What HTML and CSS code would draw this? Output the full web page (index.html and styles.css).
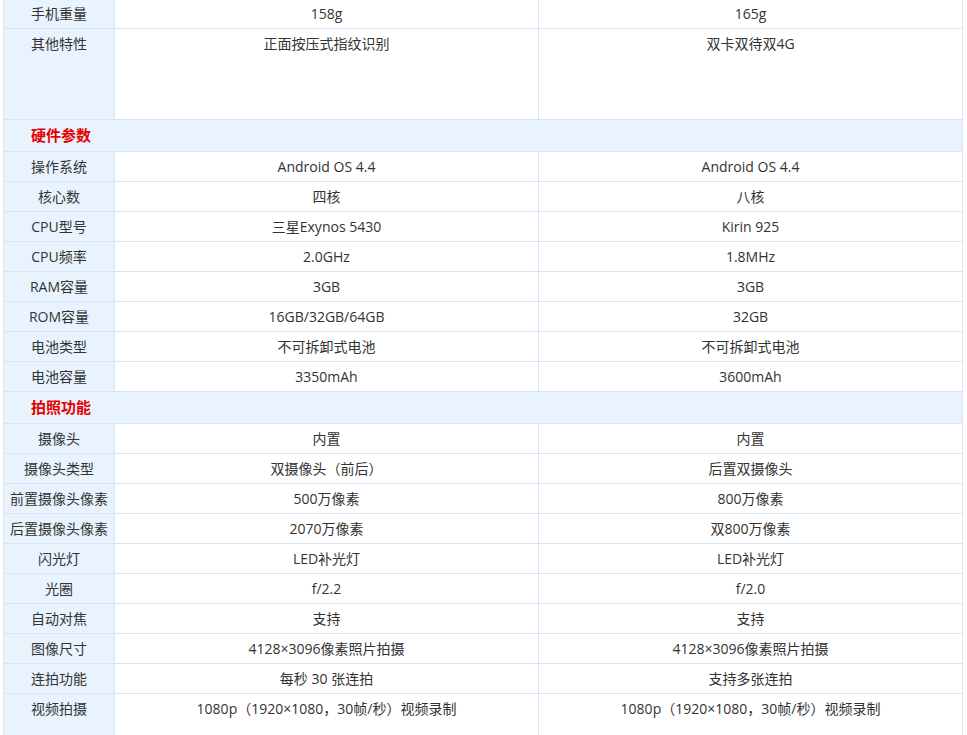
FILE: index.html
```html
<!DOCTYPE html>
<html lang="zh-CN">
<head>
<meta charset="utf-8">
<title>参数对比</title>
<link rel="stylesheet" href="styles.css">
</head>
<body>
<div class="wrap">
<table class="spec">
<colgroup><col class="c-label"><col class="c-val"><col class="c-val2"></colgroup>
<tbody>
<tr><th class="label">手机重量</th><td>158g</td><td>165g</td></tr>
<tr class="tall"><th class="label">其他特性</th><td>正面按压式指纹识别</td><td>双卡双待双4G</td></tr>
<tr class="section"><th colspan="3">硬件参数</th></tr>
<tr><th class="label">操作系统</th><td>Android OS 4.4</td><td>Android OS 4.4</td></tr>
<tr><th class="label">核心数</th><td>四核</td><td>八核</td></tr>
<tr><th class="label">CPU型号</th><td>三星Exynos 5430</td><td>Kirin 925</td></tr>
<tr><th class="label">CPU频率</th><td>2.0GHz</td><td>1.8MHz</td></tr>
<tr><th class="label">RAM容量</th><td>3GB</td><td>3GB</td></tr>
<tr><th class="label">ROM容量</th><td>16GB/32GB/64GB</td><td>32GB</td></tr>
<tr><th class="label">电池类型</th><td>不可拆卸式电池</td><td>不可拆卸式电池</td></tr>
<tr><th class="label">电池容量</th><td>3350mAh</td><td>3600mAh</td></tr>
<tr class="section"><th colspan="3">拍照功能</th></tr>
<tr><th class="label">摄像头</th><td>内置</td><td>内置</td></tr>
<tr><th class="label">摄像头类型</th><td>双摄像头（前后）</td><td>后置双摄像头</td></tr>
<tr><th class="label">前置摄像头像素</th><td>500万像素</td><td>800万像素</td></tr>
<tr><th class="label">后置摄像头像素</th><td>2070万像素</td><td>双800万像素</td></tr>
<tr><th class="label">闪光灯</th><td>LED补光灯</td><td>LED补光灯</td></tr>
<tr><th class="label">光圈</th><td>f/2.2</td><td>f/2.0</td></tr>
<tr><th class="label">自动对焦</th><td>支持</td><td>支持</td></tr>
<tr><th class="label">图像尺寸</th><td>4128×3096像素照片拍摄</td><td>4128×3096像素照片拍摄</td></tr>
<tr><th class="label">连拍功能</th><td>每秒 30 张连拍</td><td>支持多张连拍</td></tr>
<tr class="tall"><th class="label">视频拍摄</th><td>1080p（1920×1080，30帧/秒）视频录制</td><td>1080p（1920×1080，30帧/秒）视频录制</td></tr>
</tbody>
</table>
</div>
</body>
</html>
```
FILE: styles.css
```css
html, body {
  margin: 0;
  padding: 0;
  background: #ffffff;
}
.wrap {
  margin: -2px 0 0 3px;
}
.spec {
  width: 960px;
  table-layout: fixed;
  border-collapse: collapse;
  font-family: "Open Sans", "Noto Sans CJK SC", sans-serif;
  font-size: 14px;
  color: #333333;
}
.c-label { width: 111px; }
.c-val { width: 424px; }
.spec th,
.spec td {
  border: 1px solid #d5e5f5;
  height: 29px;
  padding: 0;
  line-height: 29px;
  text-align: center;
  vertical-align: top;
  font-weight: normal;
  white-space: nowrap;
}
.spec th.label {
  background: #e8f3fe;
}
.spec tr.tall th,
.spec tr.tall td {
  height: 90px;
}
.spec tr.section th {
  height: 31px;
  line-height: 31px;
  background: #e8f3fe;
  text-align: left;
  padding-left: 27px;
  color: #e60000;
  font-weight: bold;
  font-size: 15px;
}
```
